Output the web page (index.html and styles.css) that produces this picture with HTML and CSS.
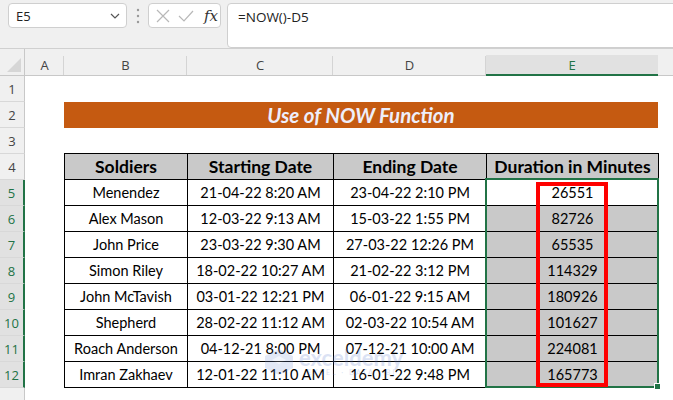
FILE: index.html
```html
<!DOCTYPE html>
<html lang="en">
<head>
    <meta charset="UTF-8">
    <title>Use of NOW Function</title>
    <link rel="stylesheet" href="styles.css">
</head>
<body>

<div class="formula-bar">
    <div class="name-box">
        <span>E5</span>
        <svg width="10" height="6" viewBox="0 0 10 6"><path d="M1 1 L5 5 L9 1" fill="none" stroke="#555" stroke-width="1.2"/></svg>
    </div>
    <div class="grip">
        <svg width="4" height="16" viewBox="0 0 4 16"><circle cx="2" cy="2" r="1.2" fill="#999"/><circle cx="2" cy="8" r="1.2" fill="#999"/><circle cx="2" cy="14" r="1.2" fill="#999"/></svg>
    </div>
    <div class="fx-box">
        <svg width="14" height="14" viewBox="0 0 14 14"><path d="M1 1 L13 13 M13 1 L1 13" stroke="#b8b8b8" stroke-width="1.2"/></svg>
        <svg width="16" height="12" viewBox="0 0 16 12"><path d="M1 6 L6 11 L15 1" fill="none" stroke="#b8b8b8" stroke-width="1.2"/></svg>
        <span class="fx">fx</span>
    </div>
    <div class="formula-input">=NOW()-D5</div>
</div>

<div class="sheet">
    <div class="corner">
        <svg width="14" height="14" viewBox="0 0 14 14"><path d="M14 0 L14 14 L0 14 Z" fill="#d6d6d6"/></svg>
    </div>
    <div class="col-head">A</div>
    <div class="col-head">B</div>
    <div class="col-head">C</div>
    <div class="col-head">D</div>
    <div class="col-head active">E</div>
    <div class="col-head last"></div>

    <div class="row-head r1">1</div>
    <div class="row-head r2">2</div>
    <div class="row-head r3">3</div>
    <div class="row-head r4">4</div>
    <div class="row-head r5 sel">5</div>
    <div class="row-head r6 sel">6</div>
    <div class="row-head r7 sel">7</div>
    <div class="row-head r8 sel">8</div>
    <div class="row-head r9 sel">9</div>
    <div class="row-head r10 sel">10</div>
    <div class="row-head r11 sel">11</div>
    <div class="row-head r12 sel">12</div>
    <div class="row-head r13"></div>

    <div class="title">Use of NOW Function</div>

    <div class="data-wrap">
        <table class="data">
            <colgroup>
                <col class="c-b"><col class="c-c"><col class="c-d"><col class="c-e">
            </colgroup>
            <tr class="head">
                <th>Soldiers</th><th>Starting Date</th><th>Ending Date</th><th>Duration in Minutes</th>
            </tr>
            <tr><td>Menendez</td><td>21-04-22 8:20 AM</td><td>23-04-22 2:10 PM</td><td class="dur first">26551</td></tr>
            <tr><td>Alex Mason</td><td>12-03-22 9:13 AM</td><td>15-03-22 1:55 PM</td><td class="dur">82726</td></tr>
            <tr><td>John Price</td><td>23-03-22 9:30 AM</td><td>27-03-22 12:26 PM</td><td class="dur">65535</td></tr>
            <tr><td>Simon Riley</td><td>18-02-22 10:27 AM</td><td>21-02-22 3:12 PM</td><td class="dur">114329</td></tr>
            <tr><td>John McTavish</td><td>03-01-22 12:21 PM</td><td>06-01-22 9:15 AM</td><td class="dur">180926</td></tr>
            <tr><td>Shepherd</td><td>28-02-22 11:12 AM</td><td>02-03-22 10:54 AM</td><td class="dur">101627</td></tr>
            <tr><td>Roach Anderson</td><td>04-12-21 8:00 PM</td><td>07-12-21 10:00 AM</td><td class="dur">224081</td></tr>
            <tr><td>Imran Zakhaev</td><td>12-01-22 11:10 AM</td><td>16-01-22 9:48 PM</td><td class="dur">165773</td></tr>
        </table>

        <div class="watermark">
            <svg width="32" height="28" viewBox="0 0 32 28"><path d="M16 1 L30 8 L30 20 L16 27 L2 20 L2 8 Z" fill="#7f9ad8"/><path d="M16 8 L23 12 L16 16 L9 12 Z" fill="#c8d4f2"/></svg>
            <div class="wm-text">
                <span class="wm-name">exceldemy</span>
                <span class="wm-sub">EXCEL · DATA · BI</span>
            </div>
        </div>

        <div class="selection"><span class="handle"></span></div>
        <div class="red-box"></div>
    </div>
</div>

</body>
</html>
```

FILE: styles.css
```css
body {
    margin: 0;
    background: #fff;
    font-family: "Open Sans", "Noto Sans", sans-serif;
    overflow: hidden;
}
.formula-bar {
    height: 49px;
    box-sizing: border-box;
    background: #f0f0f0;
    border-bottom: 1px solid #d0d0d0;
    display: flex;
    align-items: flex-start;
    padding-top: 3px;
}
.name-box {
    margin-left: 8px;
    width: 119px;
    height: 25px;
    box-sizing: border-box;
    background: #fff;
    border: 1px solid #cfcfcf;
    border-radius: 4px;
    display: flex;
    align-items: center;
    justify-content: space-between;
    padding: 0 6px 0 7px;
    font-size: 13px;
    color: #222;
}
.grip {
    width: 21px;
    height: 25px;
    display: flex;
    align-items: center;
    justify-content: center;
}
.fx-box {
    width: 73px;
    height: 25px;
    box-sizing: border-box;
    background: #fff;
    border: 1px solid #cfcfcf;
    border-radius: 4px;
    display: flex;
    align-items: center;
    gap: 8px;
    padding-left: 7px;
}
.fx {
    font-family: "DejaVu Serif", "Liberation Serif", serif;
    font-style: italic;
    font-size: 15px;
    color: #333;
    margin-left: 2px;
}
.formula-input {
    flex: 1;
    margin-left: 6px;
    margin-right: -8px;
    height: 45px;
    box-sizing: border-box;
    background: #fff;
    border: 1px solid #cfcfcf;
    border-radius: 4px;
    padding: 4px 0 0 10px;
    font-size: 13.5px;
    color: #222;
}

.sheet {
    display: grid;
    grid-template-columns: 25px 39px 123px 146px 153px 172px 1fr;
    grid-template-rows: 27px repeat(13, 26px);
}
.corner {
    background: #f0f0f0;
    border-right: 1px solid #c8c8c8;
    border-bottom: 1px solid #c8c8c8;
    display: flex;
    align-items: flex-end;
    justify-content: flex-end;
    padding: 0 3px 3px 0;
}
.col-head {
    background: linear-gradient(#d4d4d4, #d4d4d4) right bottom / 1px 19px no-repeat, #f0f0f0;
    border-bottom: 1px solid #c8c8c8;
    padding-top: 7px;
    text-align: center;
    font-size: 13px;
    line-height: 19px;
    color: #444;
}
.col-head.active {
    background: linear-gradient(#e1e1e1, #e1e1e1) bottom / 100% 19px no-repeat, #f0f0f0;
    border-bottom: 2px solid #217346;
    color: #217346;
}
.col-head.last {
    background: #f0f0f0;
}
.row-head {
    grid-column: 1;
    background: #f0f0f0;
    border-right: 1px solid #c8c8c8;
    border-bottom: 1px solid #d8d8d8;
    text-align: center;
    font-size: 13px;
    line-height: 26px;
    color: #444;
}
.row-head.sel {
    background: #e1e1e1;
    color: #217346;
    border-right: 2px solid #217346;
}
.r1 { grid-row: 2; }
.r2 { grid-row: 3; }
.r3 { grid-row: 4; }
.r4 { grid-row: 5; }
.r5 { grid-row: 6; }
.r6 { grid-row: 7; }
.r7 { grid-row: 8; }
.r8 { grid-row: 9; }
.r9 { grid-row: 10; }
.r10 { grid-row: 11; }
.r11 { grid-row: 12; }
.r12 { grid-row: 13; }
.r13 { grid-row: 14; }

.title {
    grid-column: 3 / 7;
    grid-row: 3;
    background: #c55a11;
    color: #eeeefa;
    font-family: "Lato", sans-serif;
    font-weight: bold;
    font-style: italic;
    font-size: 20.5px;
    line-height: 26px;
    text-align: center;
}

.data-wrap {
    grid-column: 3 / 7;
    grid-row: 5 / 14;
    position: relative;
    margin-top: -1px;
}
.data {
    border-collapse: collapse;
    table-layout: fixed;
    width: 595px;
    font-family: "Lato", sans-serif;
    color: #000;
}
.c-b { width: 123px; }
.c-c { width: 146px; }
.c-d { width: 153px; }
.c-e { width: 172px; }
.data tr {
    height: 26px;
}
.data th, .data td {
    border: 1px solid #000;
    padding: 0;
    text-align: center;
    white-space: nowrap;
}
.data th {
    background: #c9c9c9;
    font-size: 17.5px;
    font-weight: bold;
}
.data td {
    font-size: 14.5px;
}
.data td.dur {
    background: #c9c9c9;
}
.data td.dur.first {
    background: #fff;
}

.selection {
    position: absolute;
    left: 421px;
    top: 25px;
    width: 174px;
    height: 210px;
    box-sizing: border-box;
    border: 2px solid #217346;
}
.handle {
    position: absolute;
    right: -4px;
    bottom: -4px;
    width: 5px;
    height: 5px;
    background: #217346;
    border: 1px solid #fff;
}
.red-box {
    position: absolute;
    left: 472px;
    top: 29px;
    width: 72px;
    height: 205px;
    box-sizing: border-box;
    border: 4px solid #ff0000;
}
.watermark {
    position: absolute;
    left: 199px;
    top: 194px;
    display: flex;
    align-items: center;
    gap: 4px;
    opacity: 0.22;
    pointer-events: none;
}
.wm-text {
    display: flex;
    flex-direction: column;
    line-height: 1;
}
.wm-name {
    font-family: "Lato", sans-serif;
    font-weight: bold;
    font-size: 22px;
    color: #5f7fd0;
}
.wm-sub {
    font-family: "Lato", sans-serif;
    font-size: 7px;
    letter-spacing: 2px;
    color: #5f7fd0;
    margin-left: 8px;
}
```
